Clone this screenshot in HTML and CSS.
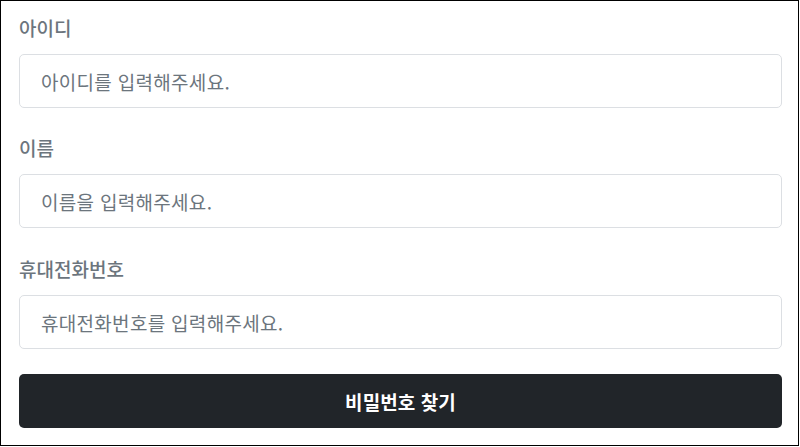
FILE: index.html
```html
<!DOCTYPE html>
<html lang="ko">
<head>
  <meta charset="UTF-8" />
  <meta name="viewport" content="width=device-width, initial-scale=1.0" />
  <title>비밀번호 찾기</title>
  <link rel="stylesheet" href="styles.css">
</head>
<body>
  <form class="find-form" onsubmit="return false;">
    <div class="field">
      <label class="field-label" for="userId">아이디</label>
      <input class="field-input" id="userId" type="text" placeholder="아이디를 입력해주세요.">
    </div>
    <div class="field field-name">
      <label class="field-label" for="userName">이름</label>
      <input class="field-input" id="userName" type="text" placeholder="이름을 입력해주세요.">
    </div>
    <div class="field field-last">
      <label class="field-label" for="userPhone">휴대전화번호</label>
      <input class="field-input" id="userPhone" type="tel" placeholder="휴대전화번호를 입력해주세요.">
    </div>
    <button class="submit-btn" type="submit">비밀번호 찾기</button>
  </form>
</body>
</html>
```

FILE: styles.css
```css
* {
  box-sizing: border-box;
}

body {
  margin: 0;
  background-color: #fff;
  font-family: "Noto Sans CJK KR", "Noto Sans", sans-serif;
}

.find-form {
  width: 799px;
  height: 446px;
  border: 1px solid #000;
  padding: 13px 16px 0 18px;
}

.field {
  margin-bottom: 26px;
}

.field-name {
  margin-bottom: 27px;
}

.field-last {
  margin-bottom: 25px;
}

.field-label {
  display: block;
  font-size: 19px;
  line-height: 27px;
  font-weight: 500;
  color: #6c757d;
  margin-bottom: 13px;
}

.field-input {
  display: block;
  width: 100%;
  height: 54px;
  padding: 0 21px;
  border: 1px solid #dcdfe3;
  border-radius: 5px;
  font-family: inherit;
  font-size: 19px;
  letter-spacing: 0.3px;
  color: #212529;
  outline: none;
}

.field-input::placeholder {
  color: #6c757d;
}

.submit-btn {
  display: block;
  width: 100%;
  height: 54px;
  border: none;
  border-radius: 5px;
  background-color: #212529;
  color: #fff;
  font-family: inherit;
  font-size: 19px;
  font-weight: 700;
  letter-spacing: 0.1px;
  cursor: pointer;
}
```
